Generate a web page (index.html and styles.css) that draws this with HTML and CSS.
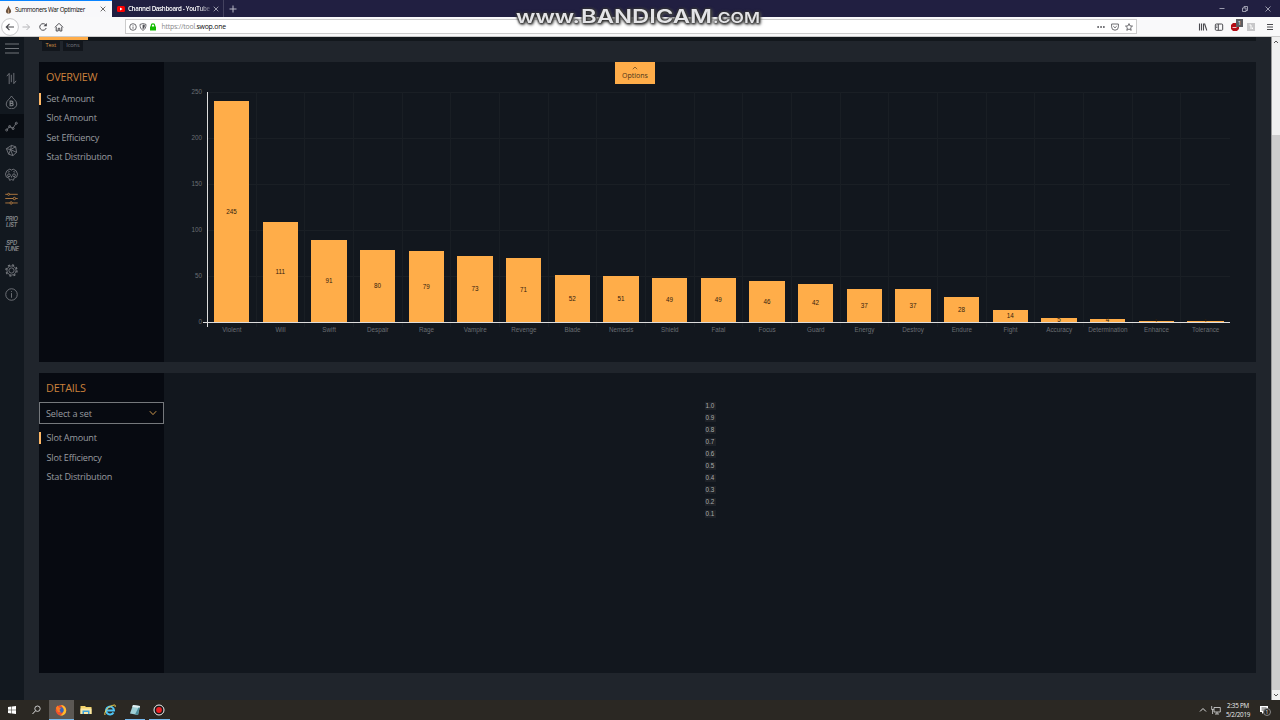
FILE: index.html
```
<!DOCTYPE html>
<html lang="en">
<head>
    <meta charset="UTF-8">
    <meta name="viewport" content="width=device-width, initial-scale=1.0">
    <title>Summoners War Optimizer</title>
    <link rel="stylesheet" href="styles.css">
</head>
<body>
    <div class="tabbar">
        <div class="tab active">
            <svg class="drop" viewBox="0 0 8 10"><path d="M4 .3C4.300 3 7 4.500 7 7 7 8.800 5.600 9.700 4 9.700S1 8.800 1 7C1 4.500 3.700 3 4 .3z" fill="#6c5340"/><path d="M4 5v4" stroke="#c9a27c"/></svg>
            <span class="tab-title">Summoners War Optimizer</span>
            <svg class="close" viewBox="0 0 6 6"><path d="M.7.7l4.600 4.600M5.300.7L.7 5.300"/></svg>
        </div>
        <div class="tab">
            <svg class="yt" viewBox="0 0 8 6"><rect width="8" height="6" rx="1.500" fill="#f00"/><path d="M3 1.600L5.600 3 3 4.400z" fill="#fff"/></svg>
            <span class="tab-title clipped">Channel Dashboard - YouTube</span>
            <svg class="close" viewBox="0 0 6 6"><path d="M.7.7l4.600 4.600M5.300.7L.7 5.300"/></svg>
        </div>
        <svg class="newtab" viewBox="0 0 8 8"><path d="M4 .5v7M.5 4h7"/></svg>
        <div class="window-buttons">
            <svg viewBox="0 0 8 8"><path d="M1.500 3.500h5"/></svg>
            <svg viewBox="0 0 8 8"><path d="M1.500 3h3.500v3.500H1.500zM3 3V1.500h3.500v4H5"/></svg>
            <svg viewBox="0 0 8 8"><path d="M1.500 1.500l5 5M6.500 1.500l-5 5"/></svg>
        </div>
    </div>

    <div class="toolbar">
        <div class="nav">
            <svg class="back" viewBox="0 0 18 18"><circle cx="9" cy="9" r="8.400" fill="#fff" stroke="#b5b5b8" stroke-width=".7"/><path d="M13 9H5.500M8.500 5.800L5.300 9l3.200 3.200"/></svg>
            <svg class="forward" viewBox="0 0 10 10"><path d="M1.500 5h7M5.500 2l3 3-3 3"/></svg>
            <svg viewBox="0 0 10 10"><path d="M7.700 3A3.300 3.300 0 1 0 8.200 6"/><path d="M8.800 1v3.300H5.500z" fill="#4a4a4f" stroke="none"/></svg>
            <svg viewBox="0 0 10 10"><path d="M1 5.300L5 1.300l4 4M2.200 5v4h2V6.300h1.600V9h2V5"/></svg>
        </div>
        <div class="urlbar">
            <svg viewBox="0 0 8 8"><circle cx="4" cy="4" r="3.300"/><path d="M4 3.500v2.300M4 2v.7"/></svg>
            <svg viewBox="0 0 8 8"><path d="M1 1.400L4 .6l3 .8c0 3-.7 4.700-3 6C1.700 6.100 1 4.400 1 1.400z"/><path d="M4 2v3.700C5.100 4.700 5.400 3.700 5.500 2.400z" fill="#55555a"/></svg>
            <svg viewBox="0 0 8 8"><rect x="1" y="3.500" width="6" height="4" fill="#12bc00" stroke="none"/><path d="M2.300 4V2.500a1.700 1.700 0 0 1 3.400 0V4" stroke="#12bc00" stroke-width="1.200"/></svg>
            <span class="url">https://tool.<b>swop.one</b></span>
            <div class="url-actions">
                <svg viewBox="0 0 8 8"><path d="M.3 4h1.700M3.200 4h1.700M6 4h1.700" stroke-width="1.500"/></svg>
                <svg viewBox="0 0 8 8"><path d="M.6 1h6.800v2.800a3.400 3.400 0 0 1-6.800 0zM2.300 3.200L4 4.800l1.700-1.600"/></svg>
                <svg viewBox="0 0 8 8"><path d="M4 .6l1 2.300 2.500.2-1.900 1.700.6 2.500L4 6 1.800 7.300l.6-2.500L.5 3.100 3 2.900z"/></svg>
            </div>
        </div>
        <div class="tools">
            <svg viewBox="0 0 10 10"><path d="M1.500 1.500v7M3.500 1.500v7M5.500 1.500v7M6.500 1.500l2.300 7" stroke-width="1.100"/></svg>
            <svg viewBox="0 0 10 10"><rect x="1.300" y="2" width="7.400" height="6.300" rx="1"/><path d="M4.300 2v6.300M2.300 4h1M2.300 5.500h1"/></svg>
            <div class="blocker">
                <svg viewBox="0 0 10 10"><path d="M3 1h4l2 2v4L7 9H3L1 7V3z" fill="#b50d17" stroke="none"/><path d="M2.500 5.500h4" stroke="#f5c5c8"/></svg>
                <span class="count">1</span>
            </div>
            <svg viewBox="0 0 10 10"><rect x="1" y="1" width="8" height="8" fill="#c7c7c9" stroke="none"/><path d="M3.500 3H5v4M6.500 5.500V7" stroke="#fff"/></svg>
            <svg class="menu" viewBox="0 0 10 10"><path d="M2 2.500h6M2 5h6M2 7.500h6"/></svg>
        </div>
    </div>

    <svg class="watermark" viewBox="0 0 260 30">
        <g class="mark-glow">
            <text x="11" y="22.500" font-size="17" textLength="64" lengthAdjust="spacingAndGlyphs">www.</text>
            <text x="76" y="22.500" font-size="19" textLength="131" lengthAdjust="spacingAndGlyphs">BANDICAM</text>
            <text x="208" y="22.500" font-size="14.500" textLength="47" lengthAdjust="spacingAndGlyphs">.COM</text>
        </g>
    </svg>

    <div class="page">
        <div class="sidebar">
            <svg class="burger" viewBox="0 0 16 16"><path d="M1 4h14M1 8.500h14M1 13h14"/></svg>
            <div class="item"><svg viewBox="0 0 14 14"><path d="M4.500 13V1.500L2 4.500M9.500 1v11.500L12 9.500M6.800 3v8"/></svg></div>
            <div class="item"><svg viewBox="0 0 14 14"><path d="M7 0C8 2.500 12.700 5 12.700 8.600A5.700 5.200 0 0 1 1.300 8.600C1.300 5 6 2.500 7 0z"/><path d="M5.500 5.500v5h2a1.300 1.300 0 0 0 0-2.600h-2 1.800a1.200 1.200 0 0 0 0-2.400z" stroke-width="1.200"/></svg></div>
            <div class="item current"><svg viewBox="0 0 14 14"><path d="M2 10.500L5 7l3.500 2L12 3.500"/><circle cx="1.800" cy="10.800" r="1.100"/><circle cx="5" cy="7" r="1.100"/><circle cx="8.700" cy="9.200" r="1.100"/><circle cx="12.200" cy="3.500" r="1.100"/></svg></div>
            <div class="item"><svg viewBox="0 0 14 14"><path d="M1.500 5L7 1.500 11.500 3l1 6-4 3.500L4 11z"/><path d="M1.500 5L6 6l5.500-3M6 6l2.500 6.500M6 6L4 11M6 6l6.500 3M7 1.500L6 6"/></svg></div>
            <div class="item"><svg viewBox="0 0 14 14"><path d="M4 10.500L1.500 9.800.5 6.500 2 3 5.200 1.200 7 2.300 8.800 1.200 12 3l1.500 3.500-1 3.300L10 10.500 9 13.300 7 12.300 5 13.300z"/><circle cx="4.300" cy="7.800" r="1.500"/><circle cx="9.700" cy="7.800" r="1.500"/><path d="M7 8.500v1.800M3 4.500l2-.7M11 4.500l-2-.7"/></svg></div>
            <div class="item selected"><svg viewBox="0 0 14 14"><path d="M.3 2.500h2.500M5 2.500h8.700M.3 7h8.500M11.500 7h2.200M.3 11.800h4.900M8 11.800h5.700"/><circle cx="3.900" cy="2.500" r="1.100"/><circle cx="10.100" cy="7" r="1.300"/><circle cx="6.600" cy="11.800" r="1.300"/></svg></div>
            <div class="item words">PRIO<br>LIST</div>
            <div class="item words">SPD<br>TUNE</div>
            <div class="item"><svg viewBox="0 0 14 14"><circle cx="7" cy="7" r="2.800"/><circle cx="7" cy="7" r="4.900"/><circle cx="7" cy="7" r="6" stroke-width="1.300" stroke-dasharray="2.200 2.510"/></svg></div>
            <div class="item"><svg viewBox="0 0 14 14"><circle cx="7" cy="7" r="6.200"/><path d="M7 5.500v5M7 3.400v1"/></svg></div>
        </div>

        <div class="content">
            <div class="topstrip">
                <div class="mode-bar"></div>
                <div class="modes">
                    <span class="mode on">Text</span>
                    <span class="mode">Icons</span>
                </div>
            </div>

            <div class="panel">
                <div class="panel-side">
                    <h2>OVERVIEW</h2>
                    <ul class="overview-list">
                        <li class="on">Set Amount</li>
                        <li>Slot Amount</li>
                        <li>Set Efficiency</li>
                        <li>Stat Distribution</li>
                    </ul>
                </div>
                <div class="panel-main">
                    <div class="options">
                        <svg viewBox="0 0 6 4"><path d="M.8 3.200L3 1l2.200 2.200"/></svg>
                        <span>Options</span>
                    </div>
                    <div class="chart">
                        <div class="y-axis">
                            <span>250</span><span>200</span><span>150</span><span>100</span><span>50</span><span>0</span>
                        </div>
                        <div class="plot" id="plot"></div>
                    </div>
                </div>
            </div>

            <div class="panel">
                <div class="panel-side">
                    <h2>DETAILS</h2>
                    <div class="select">
                        <span>Select a set</span>
                        <svg viewBox="0 0 8 6"><path d="M.8 1.200L4 4.600l3.200-3.400"/></svg>
                    </div>
                    <ul>
                        <li class="on">Slot Amount</li>
                        <li>Slot Efficiency</li>
                        <li>Stat Distribution</li>
                    </ul>
                </div>
                <div class="panel-main">
                    <div class="scale">
                        <span>1.0</span><span>0.9</span><span>0.8</span><span>0.7</span><span>0.6</span>
                        <span>0.5</span><span>0.4</span><span>0.3</span><span>0.2</span><span>0.1</span>
                    </div>
                </div>
            </div>
        </div>

        <div class="scrollbar">
            <svg viewBox="0 0 8 10"><path d="M2 6l2-2 2 2"/></svg>
            <div class="thumb"></div>
            <svg viewBox="0 0 8 10"><path d="M2 4l2 2 2-2"/></svg>
        </div>
    </div>

    <div class="taskbar">
        <div class="app"><svg viewBox="0 0 12 12"><path d="M2 3l3.500-.5v3.200H2zM6 2.400L10 2v3.700H6zM2 6.200h3.500v3.300L2 9zM6 6.200h4V10l-4-.5z" fill="#fff"/></svg></div>
        <div class="app"><svg viewBox="0 0 12 12"><circle cx="6.500" cy="4.700" r="2.700" fill="none" stroke="#ddd" stroke-width=".9"/><path d="M4.500 6.800L1.500 10" stroke="#ddd"/></svg></div>
        <div class="app focused running"><svg viewBox="0 0 12 12"><circle cx="6" cy="6.300" r="5.300" fill="#f4512c"/><path d="M6 1c4 0 5.800 4 5 7-1 3-4 4-6 3.500C9 10 9.500 5 6 1z" fill="#fdbd2e"/><circle cx="6" cy="6" r="2.700" fill="#3b62b8"/><path d="M.8 4L2.500 1.500 4 3.500l2 .5-1.500 2L6 8.500 3 8z" fill="#ff7b22"/></svg></div>
        <div class="app"><svg viewBox="0 0 12 12"><path d="M.5 2H5l1 1h5.500v7H.5z" fill="#f3d36b"/><path d="M.5 4.500h11V10H.5z" fill="#fbe8a5"/><path d="M2.500 10V6.500h7V10H8V8H4v2z" fill="#3fa3dc"/></svg></div>
        <div class="app"><svg viewBox="0 0 12 12"><path d="M9.500 8.500A4 4 0 1 1 10 6.500H3" fill="none" stroke="#4fc3f2" stroke-width="2"/><path d="M1 11C-.5 8 5 1.500 10.500 1c1 0 1 1 .5 2" fill="none" stroke="#f5d24a"/></svg></div>
        <div class="app running"><svg viewBox="0 0 12 12"><path d="M4 1l7 1-2 9-8-1.500z" fill="#9fd0d6"/><path d="M4 1l7 1-.4 2-7.300-1z" fill="#e1eef0"/><path d="M9.500 3.500L6 10.500l3 .5 1.700-7.500z" fill="#4c8c99"/></svg></div>
        <div class="app running"><svg viewBox="0 0 12 12"><circle cx="6" cy="6" r="5" fill="#171717" stroke="#f2f2f2"/><circle cx="6" cy="6" r="2.900" fill="#ed2024"/></svg></div>
        <div class="tray">
            <svg viewBox="0 0 10 10"><path d="M2 6.500l3-3 3 3"/></svg>
            <svg viewBox="0 0 10 10"><path d="M3 2.500h6.300v4.500H3zM6 7v2M4 9h4M.7 1v3.500h2M1.600 4.500V9" stroke-width=".8"/></svg>
            <div class="clock">2:35 PM<br>5/2/2019</div>
            <div class="notes">
                <svg viewBox="0 0 10 10"><path d="M1 1h8v6H5L3 9V7H1z" fill="#fff" stroke="none"/><path d="M2.500 3h5M2.500 5h5" stroke="#2b2823" stroke-width=".8"/></svg>
                <span>1</span>
            </div>
        </div>
    </div>

    <script src="chart.js"></script>
</body>
</html>
```
FILE: styles.css
```
* {
    box-sizing: border-box;
}
body {
    margin: 0;
    width: 1280px;
    height: 720px;
    overflow: hidden;
    display: flex;
    flex-direction: column;
    position: relative;
    font-family: "Open Sans", "Noto Sans", sans-serif;
    background-color: #20252c;
}
svg {
    display: block;
    fill: none;
    flex: none;
}
ul {
    list-style: none;
    margin: 0;
    padding: 0;
}

/* browser */
.tabbar {
    height: 17px;
    flex: none;
    display: flex;
    align-items: center;
    background-color: #211f41;
    color: #fff;
    font-size: 6.2px;
}
.tab {
    height: 17px;
    width: 112px;
    display: flex;
    align-items: center;
    padding: 0 5px;
    border-right: 1px solid #44425f;
}
.tab.active {
    background-color: #f8f8fa;
    color: #0c0c0d;
    border-top: 1px solid #0a84ff;
    border-right: none;
}
.tab-title {
    white-space: nowrap;
    font-weight: 600;
    letter-spacing: -0.32px;
}
.active .tab-title {
    font-weight: 500;
    letter-spacing: -0.38px;
}
.clipped {
    width: 82px;
    margin-right: 3px;
    -webkit-mask-image: linear-gradient(to right, #000 85%, rgba(0, 0, 0, 0.2));
    mask-image: linear-gradient(to right, #000 85%, rgba(0, 0, 0, 0.2));
}
.drop {
    width: 7px;
    height: 9px;
    margin-right: 3px;
}
.yt {
    width: 8px;
    height: 6px;
    margin-right: 3px;
}
.close {
    width: 6px;
    height: 6px;
    stroke: #b9b9c6;
    stroke-width: 0.8;
}
.active .close {
    stroke: #444;
    margin-left: auto;
    margin-right: 1px;
}
.newtab {
    width: 8px;
    height: 8px;
    margin-left: 5px;
    stroke: #b9b9c6;
}
.window-buttons {
    display: flex;
    gap: 15px;
    margin-left: auto;
    margin-right: 8px;
}
.window-buttons svg {
    width: 8px;
    height: 8px;
    stroke: #b9b9c6;
    stroke-width: 0.8;
}
.toolbar {
    height: 20px;
    flex: none;
    display: flex;
    align-items: center;
    background-color: #f9f9fa;
    border-bottom: 1px solid #ccc;
    stroke: #4a4a4f;
}
.nav {
    width: 125px;
    display: flex;
    align-items: center;
    padding-left: 1px;
}
.nav svg {
    width: 10px;
    height: 10px;
    margin-right: 5.5px;
}
.nav .back {
    width: 18px;
    height: 18px;
    margin-right: 2px;
    stroke-width: 1.2;
}
.nav .forward {
    stroke: #b5b5b8;
    margin-right: 7px;
}
.urlbar {
    width: 1012px;
    height: 15px;
    display: flex;
    align-items: center;
    gap: 2.2px;
    padding-left: 3px;
    background-color: #fff;
    border: 1px solid #ccc;
    stroke-width: 0.8;
}
.urlbar svg {
    width: 8px;
    height: 8px;
}
.url {
    margin-left: 2px;
    font-size: 6.9px;
    letter-spacing: -0.22px;
    color: #88888c;
}
.url b {
    font-weight: normal;
    color: #0c0c0d;
}
.url-actions {
    display: flex;
    gap: 6px;
    margin-left: auto;
    margin-right: 3px;
}
.tools {
    display: flex;
    gap: 6px;
    margin-left: auto;
    margin-right: 5px;
}
.tools svg {
    width: 10px;
    height: 10px;
}
.tools .menu {
    margin-left: 3px;
}
.blocker {
    position: relative;
}
.count {
    position: absolute;
    left: 6px;
    top: -3px;
    width: 7px;
    height: 8px;
    background-color: #5d5d61;
    color: #fff;
    font-size: 6px;
    line-height: 8px;
    text-align: center;
}
.watermark {
    position: absolute;
    left: 505px;
    top: 0;
    width: 260px;
    height: 30px;
    z-index: 2;
    font-family: Inter, sans-serif;
    font-weight: 600;
}
.mark-glow {
    fill: #e4e4e7;
    filter: drop-shadow(0 0 1px #222) drop-shadow(0 0 1px #333) drop-shadow(1px 1px 1px #555);
}

/* app */
.page {
    height: 663px;
    flex: none;
    display: flex;
}
.sidebar {
    width: 24px;
    background-color: #12181f;
    stroke: #7d8085;
    stroke-width: 0.9;
}
.burger {
    width: 16px;
    height: 16px;
    margin: 3px 0 10px 4px;
}
.item {
    height: 24px;
    display: flex;
    align-items: center;
    padding-left: 5px;
}
.item svg {
    width: 13px;
    height: 13px;
}
.item.current {
    background-color: #090d13;
}
.item.selected {
    stroke: #c48645;
}
.item.words {
    display: block;
    padding: 6px 1px 0 0;
    color: #85888c;
    font: italic 600 5.8px/6px Inter, sans-serif;
    letter-spacing: -0.4px;
    text-align: center;
}
.content {
    width: 1247px;
    padding: 0 15px;
}
.topstrip {
    height: 25px;
    border-top: 4px solid #12171c;
}
.mode-bar {
    width: 49px;
    height: 3px;
    margin-top: -4px;
    margin-bottom: 1px;
    background-color: #ffad49;
}
.modes {
    display: flex;
    gap: 3px;
    padding-left: 3px;
}
.mode {
    height: 10px;
    padding: 0 3.5px;
    background-color: #12161c;
    color: #777b81;
    font-size: 5.6px;
    line-height: 9px;
    letter-spacing: -0.1px;
}
.mode.on {
    color: #d59546;
}
.panel {
    width: 1217px;
    height: 300px;
    display: flex;
    margin-bottom: 10.5px;
    background-color: #12171e;
}
.panel-side {
    width: 125px;
    flex: none;
    background-color: #070a11;
    color: #999ca0;
    font-size: 9.1px;
}
.panel-side h2 {
    margin: 0 0 2px;
    padding: 6px 0 0 7px;
    height: 24px;
    color: #cb813c;
    font-size: 10.8px;
    font-weight: normal;
    line-height: 17px;
    letter-spacing: -0.2px;
}
.panel-side li {
    height: 12px;
    margin-bottom: 7.5px;
    padding-left: 4.5px;
    border-left: 3px solid transparent;
    line-height: 12px;
    letter-spacing: -0.2px;
}
.panel-side li.on {
    border-left: 2.5px solid #ffb866;
    padding-left: 5.5px;
}
.panel-side ul {
    padding-top: 3px;
}
.panel-side .overview-list {
    padding-top: 4.5px;
}
.select {
    height: 22px;
    display: flex;
    align-items: center;
    justify-content: space-between;
    margin: 5.5px 0 5px;
    padding: 0 6px;
    border: 1px solid #75787c;
    letter-spacing: -0.15px;
}
.select svg {
    width: 8px;
    height: 6px;
    stroke: #c9954d;
}
.panel-main {
    flex: 1;
}
.options {
    width: 40px;
    height: 22px;
    margin-left: 451px;
    display: flex;
    flex-direction: column;
    align-items: center;
    padding-top: 4px;
    background-color: #ffad49;
    color: #4b3419;
    font-size: 7px;
    line-height: 11px;
}
.options svg {
    width: 6px;
    height: 4px;
    stroke: #6f4b20;
    stroke-width: 0.8;
}
.chart {
    display: flex;
    margin-top: 8px;
    font-family: "Liberation Sans", Arial, sans-serif;
    font-size: 6.3px;
    color: #6a6e73;
}
.y-axis {
    width: 43px;
    height: 238px;
    margin-top: -4px;
    padding-right: 5px;
    display: flex;
    flex-direction: column;
    justify-content: space-between;
    align-items: flex-end;
    line-height: 8px;
}
.plot {
    width: 1023px;
    height: 231px;
    display: grid;
    grid-template-columns: repeat(21, 1fr);
    position: relative;
    border-left: 1px solid #ddd;
    background-image: repeating-linear-gradient(to bottom, #1a1f25 0, #1a1f25 1px, transparent 1px, transparent 46px);
}
/* x axis line over the bars, y axis tick under it */
.plot::before {
    content: "";
    position: absolute;
    left: -5px;
    right: 0;
    top: 230px;
    height: 1px;
    z-index: 1;
    background-color: #ddd;
}
.plot::after {
    content: "";
    position: absolute;
    left: -1px;
    top: 231px;
    width: 1px;
    height: 4px;
    background-color: #ddd;
}
.column {
    height: 235px;
    position: relative;
    border-right: 1px solid #191e24;
}
.column:last-child {
    border-right: none;
}
.bar {
    position: absolute;
    left: 6px;
    right: 6.5px;
    bottom: 5px;
    display: flex;
    align-items: center;
    justify-content: center;
    background-color: #ffad49;
    color: #33210d;
    line-height: 8px;
}
.bar span {
    margin: -4px 0;
}
.name {
    position: absolute;
    left: -10px;
    right: -10px;
    top: 234px;
    text-align: center;
    line-height: 8px;
}
.scale {
    width: 11px;
    margin: 29px 0 0 540.5px;
    display: flex;
    flex-direction: column;
    gap: 4px;
    font-family: "Liberation Sans", Arial, sans-serif;
    font-size: 6.3px;
    line-height: 8px;
    color: #aaa;
    text-align: center;
}
.scale span {
    background-color: #1d2127;
}
.scrollbar {
    width: 9px;
    display: flex;
    flex-direction: column;
    align-items: center;
    background-color: #f0f0f0;
    border-left: 1px solid #999;
}
.scrollbar svg {
    width: 8px;
    height: 10px;
    stroke: #555;
}
.thumb {
    width: 8px;
    height: 555px;
    margin-top: 88px;
    background-color: #cdcdcd;
}

/* desktop */
.taskbar {
    height: 20px;
    flex: none;
    display: flex;
    background-color: #2b2823;
    color: #eee;
}
.app {
    width: 24.5px;
    display: flex;
    align-items: center;
    justify-content: center;
    border-bottom: 1px solid transparent;
}
.app svg {
    width: 12px;
    height: 12px;
}
.app.running {
    border-bottom-color: #76b9ed;
    margin: 0 2px;
    width: 20.5px;
}
.app.focused {
    margin: 0;
    width: 24.5px;
    background-color: #5c5854;
}
.tray {
    display: flex;
    align-items: center;
    margin-left: auto;
    stroke: #ddd;
}
.tray svg {
    width: 10px;
    height: 10px;
    margin-right: 3px;
}
.clock {
    width: 28px;
    margin-right: 7px;
    font-size: 6.3px;
    line-height: 9px;
    text-align: center;
    letter-spacing: -0.25px;
}
.notes {
    position: relative;
    width: 21px;
}
.notes span {
    position: absolute;
    left: 4px;
    top: 3px;
    width: 8px;
    height: 8px;
    border: 1px solid #888;
    border-radius: 50%;
    background-color: #2b2823;
    font-size: 5px;
    line-height: 6px;
    text-align: center;
}
```
FILE: chart.js
```
// set name, label, bar height in px
const sets = [
    ['Violent', 245, 221], ['Will', 111, 100], ['Swift', 91, 82], ['Despair', 80, 72],
    ['Rage', 79, 71], ['Vampire', 73, 66], ['Revenge', 71, 64], ['Blade', 52, 47],
    ['Nemesis', 51, 46], ['Shield', 49, 44], ['Fatal', 49, 44], ['Focus', 46, 41],
    ['Guard', 42, 38], ['Energy', 37, 33], ['Destroy', 37, 33], ['Endure', 28, 25],
    ['Fight', 14, 12.5], ['Accuracy', 5, 4.5], ['Determination', 4, 3.5],
    ['Enhance', 1, 1], ['Tolerance', 1, 1]
];

document.getElementById('plot').innerHTML = sets.map(([name, label, height]) => `
    <div class="column">
        <div class="bar" style="height: ${height}px"><span>${label}</span></div>
        <div class="name">${name}</div>
    </div>`).join('');
```
